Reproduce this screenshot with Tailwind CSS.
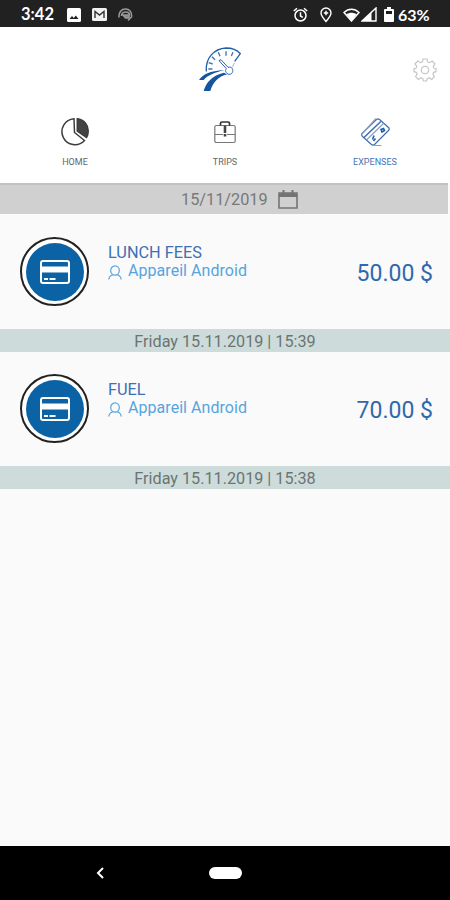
<!DOCTYPE html>
<html lang="en">
<head>
  <meta charset="UTF-8">
  <meta name="viewport" content="width=device-width, initial-scale=1.0">
  <title>Expenses</title>
  <script src="https://cdn.jsdelivr.net/npm/@tailwindcss/browser@4"></script>
</head>
<body class="bg-[#fafafa] font-[Roboto,sans-serif]">
<div class="w-[450px] h-[900px] flex flex-col overflow-hidden">

  <!-- Status bar -->
  <div class="h-[27px] shrink-0 bg-[#212121] flex items-center pl-[21px] pr-[20px] pt-[2px] text-white">
    <span class="w-[46px] font-[Lato,sans-serif] font-bold text-[16.500px] leading-none">3:42</span>
    <svg class="w-[14px] h-[14px] mr-[11px]" viewBox="0 0 14 14">
      <rect width="14" height="14" rx="1.5" fill="#fff"/>
      <path d="M2.5 11l2.5-3 1.8 2 2-2.5L11.5 11z" fill="#212121"/>
    </svg>
    <svg class="w-[15px] h-[13px] mr-[11px]" viewBox="0 0 15 13">
      <rect width="15" height="13" rx="1.5" fill="#f2f2f2"/>
      <path d="M3 10V3.500l4.500 3.500L12 3.500V10" fill="none" stroke="#333" stroke-width="1.400"/>
    </svg>
    <svg class="w-[15px] h-[14px]" viewBox="0 0 15 14" fill="none" stroke="#999" stroke-width="1.600">
      <path d="M1 9.500C.5 4 3.500 1 7.500 1S14 4 13.500 9L10 12.500"/>
      <path d="M3.500 8C3.500 5 5.500 4 8 4s3.500 1.500 3.500 3.500"/>
      <path d="M5 7h6v3H7.500z" fill="#888"/>
    </svg>
    <div class="flex-1"></div>
    <svg class="w-[15px] h-[16px] mr-[12px]" viewBox="0 0 15 16" fill="none" stroke="#fff" stroke-width="1.500">
      <circle cx="7.500" cy="8.500" r="5.500"/>
      <path d="M7.500 5.300V9l2.300 1.400M.8 4L4 1.200M14.200 4L11 1.200"/>
    </svg>
    <svg class="w-[12px] h-[16px] mr-[11px]" viewBox="0 0 12 16" fill="none" stroke="#fff" stroke-width="1.400">
      <path d="M6 14.500C3 11 1 8.500 1 6a5 5 0 0 1 10 0c0 2.500-2 5-5 8.500z"/>
      <path d="M6 3.800v4.400M3.800 6h4.400"/>
    </svg>
    <svg class="w-[17px] h-[14px] mr-[1px]" viewBox="0 0 17 14">
      <path d="M1 4.500C5.500.2 11.500.2 16 4.500L8.500 13z" fill="none" stroke="#fff" stroke-width="1.500"/>
      <path d="M3.500 6.300c3-2 7-2 10 0L8.500 13z" fill="#fff"/>
    </svg>
    <svg class="w-[16px] h-[15px] mr-[7px]" viewBox="0 0 16 15">
      <path d="M1 14L15 1v13z" fill="none" stroke="#fff" stroke-width="1.400"/>
      <path d="M1 14L10.500 5v9z" fill="#fff"/>
    </svg>
    <svg class="w-[10px] h-[15px] mr-[4px]" viewBox="0 0 10 15">
      <path d="M3 0h4v2h2q1 0 1 1v11q0 1-1 1H1q-1 0-1-1V3q0-1 1-1h2z" fill="#fff"/>
      <path d="M2 4h6v3H2z" fill="#212121"/>
    </svg>
    <span class="w-[32px] font-[Lato,sans-serif] font-bold text-[16px] leading-none whitespace-nowrap">63%</span>
  </div>

  <!-- Header with logo and tabs -->
  <div class="h-[156px] shrink-0 bg-white flex flex-col">
    <div class="h-[85px] grid grid-cols-3 items-center">
      <div></div>
      <svg class="w-[44px] h-[46px] justify-self-center ml-[-10px]" viewBox="40 25 132 138" fill="none">
        <path d="M65 98C62 58 88 30 124 28c18 0 32 5 43 17l-17 23" stroke="#1d5fa8" stroke-width="4"/>
        <path d="M124 38v13M101 41l5 12M82 54l9 9M72 72l12 4M71 91h12M145 41l-5 11" stroke="#3b73b3" stroke-width="4"/>
        <path d="M103 66l6-3 21 23c10-3 16 4 14 13-2 9-14 11-19 3-4-5-2-9 0-12z" stroke="#2a65ac" stroke-width="3"/>
        <path d="M150 72l-7 14" stroke="#6d97c7" stroke-width="2"/>
        <path d="M43 124c12-17 31-27 76-30-29 8-51 16-62 30z" fill="#15549f"/>
        <path d="M57 157c8-27 25-46 61-55 4 2 7 4 10 5-28 7-43 24-51 50z" fill="#15549f"/>
      </svg>
      <svg class="w-[24px] h-[24px] justify-self-end mr-[13px]" viewBox="0 0 24 24" fill="none" stroke="#c6c6c6" stroke-width="1.200">
        <path d="M10 1h4l.6 2.900 2 .8L19.200 3 22 5.800l-1.800 2.500.8 2L23 10.500v3.200l-2.300.6-.8 2 1.500 2.400-2.700 2.700-2.500-1.600-2 .9-.7 2.300h-3l-.7-2.300-2-.9-2.500 1.600-2.700-2.700 1.500-2.400-.8-2L1 13.700v-3.200l2-.2.8-2L2 5.800 4.800 3l2.600 1.700 2-.8z"/>
        <circle cx="12" cy="12" r="3.700"/>
      </svg>
    </div>
    <div class="grid grid-cols-3 text-center text-[9px] leading-[10px] text-[#666]">
      <div class="flex flex-col items-center">
        <svg class="w-[28px] h-[30px] mt-[5px] mb-[10px]" viewBox="0 0 28 30" fill="none" stroke="#3d3d3d" stroke-width="1.500">
          <path d="M13 1.700A13 13 0 1 0 23.500 23.500L13.500 15.500z"/>
          <path d="M16.300 1.800C23 2.800 27.500 8 27.200 14.500c0 2.300-.6 4.300-1.700 6L16.300 14z" fill="#444"/>
        </svg>
        <span>HOME</span>
      </div>
      <div class="flex flex-col items-center">
        <svg class="w-[22px] h-[30px] mt-[5px] mb-[10px]" viewBox="0 0 22 30" fill="none" stroke="#777" stroke-width="1.200">
          <rect x=".8" y="8.500" width="20.400" height="17" rx="1.500"/>
          <path d="M6.500 8.500V6.300Q6.500 5 8 5h6q1.500 0 1.500 1.300v2.200" stroke="#333" stroke-width="1.700"/>
          <path d="M1 17.500h8M13 17.500h8"/>
          <path d="M11 8.500v7.500M11 17v2.500" stroke="#444" stroke-width="2.600"/>
        </svg>
        <span>TRIPS</span>
      </div>
      <div class="flex flex-col items-center text-[#3f74b6]">
        <svg class="w-[30px] h-[30px] mt-[5px] mb-[10px]" viewBox="0 0 30 30" fill="none" stroke="#3d6db0" stroke-width="1.200">
          <path d="M2 16.500L16.500 2.500q1.500-1.300 3 0l9 8q1.500 1.500 0 3L14.500 27.500q-1.500 1.300-3 0l-9-8q-1.500-1.500-.5-3z"/>
          <path d="M4 20.500L20.800 4.500" stroke-width="1.500"/>
          <path d="M1.500 17.500L16 1.500M14 28.500h7.500M7 22.500L23.500 6.500" stroke="#8a9fc2"/>
          <path d="M21 12.500l2.500-1 1 2-2.500 1.500zM12.500 22.500l1.500-4M15.500 21.500l-2 2.500" stroke="#1d5fa8" stroke-width="1.600"/>
        </svg>
        <span>EXPENSES</span>
      </div>
    </div>
  </div>

  <!-- Date filter -->
  <div class="w-[448px] h-[31px] shrink-0 bg-[#d0d0d0] border-t-2 border-[#c2c2c2] flex items-center pl-[181px] text-[#787878]">
    <span class="w-[97px] text-[16.300px] leading-none mt-[2px]">15/11/2019</span>
    <svg class="w-[20px] h-[19px]" viewBox="0 0 20 19" fill="none" stroke="#747474" stroke-width="1.600">
      <path d="M1 3h18v15H1z"/>
      <path d="M1 5h18" stroke-width="4"/>
      <path d="M5.500 0v4M14.500 0v4" stroke-width="2"/>
    </svg>
  </div>

  <!-- Expense list -->
  <div class="h-[115px] shrink-0 flex pl-[20px] pr-[17px] pt-[23px]">
    <div class="w-[69px] h-[69px] rounded-full border-2 border-[#222] bg-white flex items-center justify-center">
      <div class="w-[58px] h-[58px] rounded-full bg-[#0b62a5] flex items-center justify-center">
        <svg class="w-[30px] h-[24px]" viewBox="0 0 30 24">
          <rect x="1" y="1" width="28" height="22" rx="2" fill="none" stroke="#fff" stroke-width="2"/>
          <path d="M2 6.500h26v6H2z" fill="#fff"/>
          <path d="M4 19h4M9.500 19h6" stroke="#fff" stroke-width="1.800"/>
        </svg>
      </div>
    </div>
    <div class="ml-[19px] pt-[6px]">
      <div class="text-[16.300px] leading-[19px] text-[#3f6fb4]">LUNCH FEES</div>
      <div class="flex text-[16px] leading-[18px] text-[#56a4de]">
        <svg class="w-[14px] h-[15px] mt-[3px] mr-[6px]" viewBox="0 0 14 15" fill="none" stroke="currentColor" stroke-width="1.200">
          <ellipse cx="7" cy="5.500" rx="4.300" ry="4.600"/>
          <path d="M4.800 9.800C2.500 10.500 1 12 .8 14.500M9.200 9.800c2.300.7 3.800 2.200 4 4.700"/>
        </svg>
        <span class="tracking-[0.050px]">Appareil Android</span>
      </div>
    </div>
    <div class="ml-auto pt-[22px] text-[23px] leading-[29px] text-[#2f69ad]">50.00 $</div>
  </div>
  <div class="h-[23px] shrink-0 bg-[#cddcda] text-center text-[16.200px] leading-[25px] text-[#6c7473]">Friday 15.11.2019 | 15:39</div>

  <div class="h-[114px] shrink-0 flex pl-[20px] pr-[17px] pt-[22px]">
    <div class="w-[69px] h-[69px] rounded-full border-2 border-[#222] bg-white flex items-center justify-center">
      <div class="w-[58px] h-[58px] rounded-full bg-[#0b62a5] flex items-center justify-center">
        <svg class="w-[30px] h-[24px]" viewBox="0 0 30 24">
          <rect x="1" y="1" width="28" height="22" rx="2" fill="none" stroke="#fff" stroke-width="2"/>
          <path d="M2 6.500h26v6H2z" fill="#fff"/>
          <path d="M4 19h4M9.500 19h6" stroke="#fff" stroke-width="1.800"/>
        </svg>
      </div>
    </div>
    <div class="ml-[19px] pt-[6px]">
      <div class="text-[16.300px] leading-[19px] text-[#3f6fb4]">FUEL</div>
      <div class="flex text-[16px] leading-[18px] text-[#56a4de]">
        <svg class="w-[14px] h-[15px] mt-[3px] mr-[6px]" viewBox="0 0 14 15" fill="none" stroke="currentColor" stroke-width="1.200">
          <ellipse cx="7" cy="5.500" rx="4.300" ry="4.600"/>
          <path d="M4.800 9.800C2.500 10.500 1 12 .8 14.500M9.200 9.800c2.300.7 3.800 2.200 4 4.700"/>
        </svg>
        <span class="tracking-[0.050px]">Appareil Android</span>
      </div>
    </div>
    <div class="ml-auto pt-[22px] text-[23px] leading-[29px] text-[#2f69ad]">70.00 $</div>
  </div>
  <div class="h-[23px] shrink-0 bg-[#cddcda] text-center text-[16.200px] leading-[25px] text-[#6c7473]">Friday 15.11.2019 | 15:38</div>

  <div class="flex-1"></div>

  <!-- Navigation bar -->
  <div class="h-[54px] shrink-0 bg-black flex items-center pl-[96px]">
    <svg class="w-[8px] h-[12px] mr-[105px]" viewBox="0 0 8 12" fill="none" stroke="#fff" stroke-width="2">
      <path d="M7 1L2 6l5 5"/>
    </svg>
    <div class="w-[33px] h-[12px] rounded-full bg-white"></div>
  </div>
</div>
</body>
</html>
